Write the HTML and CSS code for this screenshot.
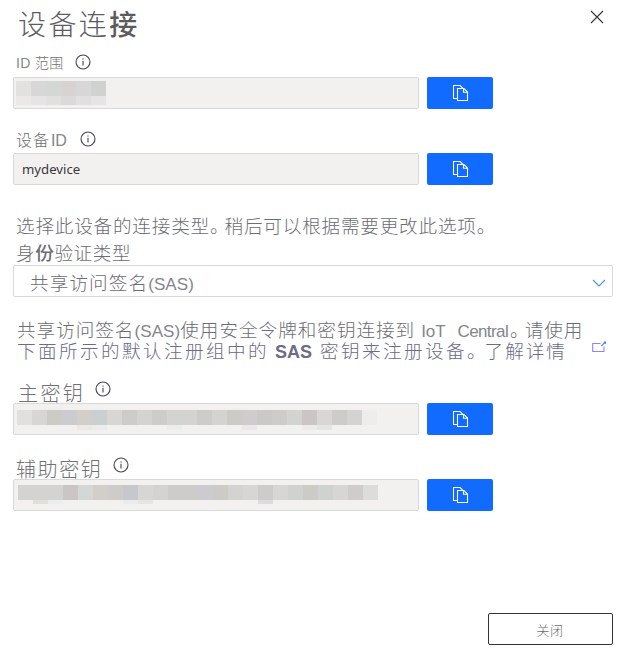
FILE: index.html
```html
<!DOCTYPE html>
<html lang="zh-CN">
<head>
<meta charset="utf-8">
<title>设备连接</title>
<link rel="stylesheet" href="styles.css">
</head>
<body>
<svg class="defs" width="0" height="0" aria-hidden="true">
  <symbol id="info" viewBox="0 0 16 16"><circle cx="8" cy="8" r="7" fill="none" stroke="currentColor" stroke-width="1.1"/><path d="M8 6.7V11.4" stroke="currentColor" stroke-width="1.1"/><path d="M8 4.4V5.6" stroke="currentColor" stroke-width="1.2"/></symbol>
  <symbol id="copy" viewBox="0 0 16 17"><path d="M4.5 13.5H.5V.5H7L10 3.3M4.5 3.5H11L14.5 7V15.5H4.5ZM10.5 3.5V7.2H14.5" fill="none" stroke="#fff" stroke-width="1.1"/></symbol>
</svg>
<main class="panel">
  <header class="header">
    <h1 class="title">设备连<b>接</b></h1>
    <button class="close" aria-label="关闭"><svg width="14" height="14" viewBox="0 0 14 14"><path d="M1 1L13 13M13 1L1 13" stroke="#35323c" stroke-width="1.1"/></svg></button>
  </header>

  <div class="label label-scope"><span><span class="latin">ID</span> 范围</span><svg class="info"><use href="#info"/></svg></div>
  <div class="row">
    <div class="field"><div class="mosaic mosaic-scope">
      <i class="c1"></i><i class="c2"></i><i class="c3"></i><i class="c4"></i><i class="c2"></i><i class="c5"></i>
      <i class="l1"></i><i class="l2"></i><i class="l3"></i><i class="l4"></i><i class="l3"></i><i class="l2"></i>
    </div></div>
    <button class="copy" aria-label="复制"><svg><use href="#copy"/></svg></button>
  </div>

  <div class="label label-device"><span>设备<span class="latin">ID</span></span><svg class="info"><use href="#info"/></svg></div>
  <div class="row">
    <div class="field value">mydevice</div>
    <button class="copy" aria-label="复制"><svg><use href="#copy"/></svg></button>
  </div>

  <p class="text intro">选择此设备的连接类型<span class="stop">。</span>稍后可以根据需要更改此选项<span class="stop">。</span></p>
  <p class="text auth">身<b>份</b>验证类型</p>
  <div class="select"><span class="text">共享访问签名<span class="sas">(SAS)</span></span>
    <svg width="14" height="8" viewBox="0 0 14 8"><path d="M1 1L7 7L13 1" fill="none" stroke="#4a9bd0" stroke-width="1.2"/></svg>
  </div>

  <div class="help">
    <p class="text first">共享访问签名<span class="sas">(SAS)</span>使用安全令牌和密钥连接到<span class="iot">IoT</span><span class="central">Central</span><span class="stop">。</span>请使用</p>
    <p class="text second">下面所示的默认注册组中的<b class="sas-bold">SAS</b>密钥来注册设备<span class="stop">。</span><span class="more">了解详情</span><svg width="15" height="12" viewBox="0 0 15 12"><path d="M8.5 2.5H.7V10.5H12V5.5" fill="none" stroke="#8f83ff" stroke-width="1.1"/><path d="M9.3 5L13 1.5" stroke="#5c83ff" stroke-width="1.1"/><path d="M11.8.5H14V2.8H11.8Z" fill="#4d83ff"/></svg></p>
  </div>

  <div class="label label-primary"><span>主密钥</span><svg class="info"><use href="#info"/></svg></div>
  <div class="row">
    <div class="field"><div class="mosaic mosaic-primary">
      <i class="k1"></i><i class="k3"></i><i class="k4"></i><i class="k5"></i><i class="k6"></i><i class="k7"></i><i class="k3"></i><i class="k8"></i><i class="k2"></i><i class="k8"></i><i class="k2"></i><i class="k2"></i><i class="k8"></i><i class="k2"></i><i class="k4"></i><i class="k9"></i><i class="k10"></i><i class="k8"></i><i class="k2"></i><i class="k11"></i><i class="k12"></i><i class="k8"></i><i class="k2"></i><i class="k0"></i>
      <i class="n"></i><i class="n"></i><i class="n"></i><i class="n"></i><i class="l1"></i><i class="l5"></i><i class="n"></i><i class="n"></i><i class="n"></i><i class="n"></i><i class="l5"></i><i class="n"></i><i class="n"></i><i class="n"></i><i class="n"></i><i class="l1"></i><i class="n"></i><i class="n"></i><i class="n"></i><i class="l6"></i><i class="l2"></i>
    </div></div>
    <button class="copy" aria-label="复制"><svg><use href="#copy"/></svg></button>
  </div>

  <div class="label label-secondary"><span>辅助密钥</span><svg class="info"><use href="#info"/></svg></div>
  <div class="row">
    <div class="field"><div class="mosaic mosaic-secondary">
      <i class="k2"></i><i class="k2"></i><i class="k2"></i><i class="k11"></i><i class="c3"></i><i class="k6"></i><i class="k8"></i><i class="k7b"></i><i class="k3"></i><i class="k2"></i><i class="k8"></i><i class="k8"></i><i class="k5"></i><i class="k4"></i><i class="k2"></i><i class="k3"></i><i class="k8"></i><i class="k3"></i><i class="c5"></i><i class="k4"></i><i class="c5"></i><i class="k3"></i><i class="k9"></i><i class="k13"></i>
      <i class="n"></i><i class="l7"></i><i class="l5"></i><i class="n"></i><i class="n"></i><i class="n"></i><i class="n"></i><i class="l5"></i><i class="l2"></i><i class="n"></i><i class="n"></i><i class="n"></i><i class="n"></i><i class="n"></i><i class="n"></i><i class="n"></i><i class="k13"></i>
    </div></div>
    <button class="copy" aria-label="复制"><svg><use href="#copy"/></svg></button>
  </div>

  <footer class="footer"><button class="dismiss">关闭</button></footer>
</main>
</body>
</html>
```
FILE: styles.css
```css
* { box-sizing: border-box; }
body { margin: 0; background: #fff; font-family: "Liberation Sans", "Noto Sans CJK SC", sans-serif; color: #707075; }
h1, p { margin: 0; font-weight: 300; }
b { font-weight: 500; }
button { padding: 0; font: inherit; }
svg { display: block; flex: none; }
.defs { position: absolute; }
.panel { width: 626px; height: 657px; padding: 0 13px 12px; display: flex; flex-direction: column; overflow: hidden; }

.header { height: 48px; display: flex; justify-content: space-between; padding-left: 5px; }
.title { font-size: 28px; line-height: 51px; letter-spacing: 2.4px; color: #5c5c5e; white-space: nowrap; }
.close { width: 14px; height: 14px; margin: 10px 9px 0 0; border: 0; background: none; }

.label { display: flex; align-items: center; white-space: nowrap; font-weight: 300; }
.info { width: 16px; height: 16px; color: #42424e; }
.latin, .sas, .iot, .central { color: #85858c; }
.label-scope { height: 29px; padding: 0 0 1px 3px; font-size: 14px; letter-spacing: .35px; gap: 11px; }
.label-device { height: 28px; margin-top: 16px; padding: 0 0 1px 3px; font-size: 16px; letter-spacing: 1px; gap: 14px; }
.label-device .latin { letter-spacing: -.3px; margin-left: 1px; }
.label-primary { height: 22px; padding-left: 5px; font-size: 20px; letter-spacing: 2.4px; gap: 10px; }
.label-secondary { height: 22px; margin-top: 22px; padding-left: 3px; font-size: 20px; letter-spacing: 1.6px; gap: 11px; }
.label-primary .info, .label-secondary .info { margin-bottom: 7px; }

.row { display: flex; gap: 8px; height: 32px; flex: none; }
.field { width: 406px; height: 32px; border: 1px solid #d9d9da; border-radius: 2px; background: #f3f1f0; overflow: hidden; }
.value { padding-left: 8px; font: 13.2px/30px "Noto Sans", sans-serif; color: #38383c; }
.copy { width: 66px; height: 32px; border: 0; border-radius: 2px; background: #126bff; display: flex; align-items: center; justify-content: center; }
.copy svg { width: 16px; height: 17px; margin-left: 1px; }

.text { font-size: 18.6px; letter-spacing: .75px; font-weight: 300; white-space: nowrap; color: #6c6c74; }
.intro { height: 28px; line-height: 29px; margin-top: 27px; padding-left: 3px; letter-spacing: .8px; }
.auth { height: 25px; line-height: 28px; padding-left: 3px; letter-spacing: .6px; }
.stop { letter-spacing: -4px; }
.select { height: 32px; flex: none; border: 1px solid #d9d9da; border-radius: 2px; display: flex; align-items: center; justify-content: space-between; padding: 5px 6px 0 16px; }
.select .text { letter-spacing: 1.1px; line-height: 27px; }
.select svg { margin-bottom: 2px; }
.sas { font-size: 17px; letter-spacing: .1px; }

.help { height: 64px; margin-top: 20px; padding: 3px 0 0 4px; }
.first { height: 21px; line-height: 21px; letter-spacing: .98px; }
.iot { font-size: 17px; letter-spacing: -.1px; margin-left: 6px; }
.central { font-size: 17px; letter-spacing: -.6px; margin: 0 2px 0 12px; }
.second { height: 22px; line-height: 22px; letter-spacing: 2.4px; display: flex; color: #6c6c86; }
.sas-bold { font-weight: 700; font-size: 18px; letter-spacing: 0; margin: 0 8px 0 6px; }
.more { letter-spacing: 2px; margin-left: 3px; }
.second svg { margin: 0 0 0 25px; }

.mosaic { display: grid; grid-auto-rows: 12px; }
.mosaic-scope { grid-template: 15px 9px / repeat(6, 15px); margin: 3px 0 0 2px; }
.mosaic-primary { grid-template: 15px 5px / repeat(24, 15px); margin: 6px 0 0 3px; }
.mosaic-secondary { grid-template: 15px 4px / repeat(24, 15px); margin: 5px 0 0 4px; }
.c1 { background: #e2e1e0; } .c2 { background: #d8d7d7; } .c3 { background: #d3d7d5; }
.c4 { background: #d8d3d3; } .c5 { background: #cfd2d1; }
.l1 { background: #ebe9e7; } .l2 { background: #e5e5e5; } .l3 { background: #e1e0df; } .l4 { background: #dbdadb; }
.l5 { background: #ebecec; } .l6 { background: #eeeae9; } .l7 { background: #e2dfda; }
.k0 { background: #ededed; } .k1 { background: #e1e0df; } .k2 { background: #d3d3d2; } .k3 { background: #d7d6d5; }
.k4 { background: #cccbc6; } .k5 { background: #cccbcf; } .k6 { background: #d2cfca; } .k7 { background: #cacfd1; }
.k7b { background: #c6c8cb; } .k8 { background: #cdcccb; } .k9 { background: #d0cccd; } .k10 { background: #cbc8ca; }
.k11 { background: #cbc6c5; } .k12 { background: #dad6d7; } .k13 { background: #dcdcdc; }

.footer { margin-top: auto; display: flex; justify-content: flex-end; }
.dismiss { width: 125px; height: 32px; border: 1px solid #343438; border-radius: 2px; background: #fff; color: #6c6c71; font-size: 13px; font-weight: 300; letter-spacing: .6px; padding: 0 1px 0 0; }
```
